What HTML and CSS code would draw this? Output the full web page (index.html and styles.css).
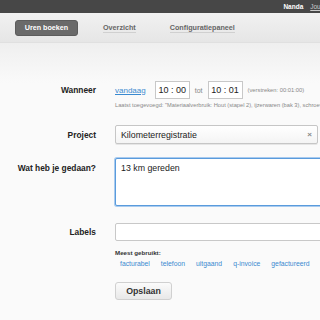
FILE: index.html
```html
<!DOCTYPE html>
<html>
  <head>
    <title>Uren boeken</title>
    <meta charset="utf-8" />
    <link rel="stylesheet" href="styles.css">
  </head>
  <body>
    <div class="topbar">
      <span class="user">Nanda</span>
      <a class="account" href="#">Jouw account</a>
    </div>
    <div class="nav">
      <a class="tab active" href="#">Uren boeken</a>
      <a class="tab" href="#">Overzicht</a>
      <a class="tab" href="#">Configuratiepaneel</a>
    </div>
    <div class="main">
      <form class="form">
        <div class="row row-when">
          <label class="lbl">Wanneer</label>
          <div class="field when">
            <a class="today" href="#">vandaag</a>
            <span class="time">10 : 00</span>
            <span class="tot">tot</span>
            <span class="time">10 : 01</span>
            <span class="elapsed">(verstreken: 00:01:00)</span>
          </div>
        </div>
        <p class="last">Laatst toegevoegd: "Materiaalverbruik: Hout (stapel 2), ijzerwaren (bak 3), schroeven</p>

        <div class="row row-project">
          <label class="lbl">Project</label>
          <div class="field">
            <div class="select">
              <span>Kilometerregistratie</span>
              <span class="clear">&times;</span>
            </div>
          </div>
        </div>

        <div class="row row-what">
          <label class="lbl lbl-top">Wat heb je gedaan?</label>
          <div class="field">
            <div class="textarea">13 km gereden</div>
          </div>
        </div>

        <div class="row row-labels">
          <label class="lbl">Labels</label>
          <div class="field">
            <div class="input"></div>
          </div>
        </div>

        <div class="row row-used">
          <span></span>
          <div class="field">
            <div class="used-title">Meest gebruikt:</div>
            <div class="tags">
              <a href="#">facturabel</a>
              <a href="#">telefoon</a>
              <a href="#">uitgaand</a>
              <a href="#">q-invoice</a>
              <a href="#">gefactureerd</a>
            </div>
          </div>
        </div>

        <div class="row row-submit">
          <span></span>
          <div class="field">
            <button class="save" type="button">Opslaan</button>
          </div>
        </div>
      </form>
    </div>
  </body>
</html>
```

FILE: styles.css
```css
*{
    margin:0;
    padding:0;
    box-sizing:border-box;
}
body{
    font-family:"Liberation Sans", Arial, sans-serif;
    background:#fafafa;
    color:#222;
    width:320px;
    height:320px;
    overflow:hidden;
}
a{
    text-decoration:none;
}

/* top bar */
.topbar{
    height:13px;
    background:#474747;
    display:flex;
    align-items:center;
    justify-content:flex-end;
    gap:7px;
    font-size:6.5px;
    white-space:nowrap;
    margin-right:-30px;
}
.user{
    color:#fff;
    font-weight:bold;
}
.account{
    color:#ccc;
    text-decoration:underline;
}

/* tabs */
.nav{
    height:30px;
    background:linear-gradient(#f1f1f1,#e6e6e6);
    border-bottom:1px solid #e0e0e0;
    display:flex;
    align-items:center;
    padding-left:15px;
}
.tab{
    font-size:7.2px;
    font-weight:bold;
    color:#666;
    margin-right:34px;
    border-bottom:1px solid #d0d0d0;
    line-height:9px;
}
.tab.active{
    background:#6a6a6a;
    color:#fff;
    border:1px solid #5c5c5c;
    border-radius:3px;
    width:63px;
    height:16px;
    line-height:14px;
    text-align:center;
    margin-right:25px;
}

/* form */
.main{
    background:linear-gradient(#efefef,#fafafa 40px);
    padding-top:38px;
    height:277px;
}
.row{
    display:grid;
    grid-template-columns:96px 240px;
    column-gap:19px;
    align-items:center;
}
.lbl{
    font-size:8.4px;
    font-weight:bold;
    text-align:right;
    color:#222;
}
.lbl-top{
    align-self:start;
    padding-top:5px;
}
.when{
    display:flex;
    align-items:center;
    white-space:nowrap;
}
.today{
    font-size:8px;
    color:#3a8ad0;
    text-decoration:underline;
    margin-right:9px;
}
.time{
    display:block;
    width:35px;
    height:18px;
    line-height:16px;
    text-align:center;
    background:#fff;
    border:1px solid #c8c8c8;
    font-size:9px;
    color:#222;
}
.tot{
    font-size:7px;
    color:#888;
    margin:0 5px;
}
.elapsed{
    font-size:5.8px;
    color:#888;
    margin-left:5px;
}
.last{
    font-size:5.7px;
    color:#888;
    margin:3px 0 0 115px;
    white-space:nowrap;
    height:7px;
}
.row-project{
    margin-top:16px;
}
.select{
    width:203px;
    height:19px;
    background:linear-gradient(#fff,#f4f4f4);
    border:1px solid #c6c6c6;
    border-radius:2px;
    display:flex;
    align-items:center;
    justify-content:space-between;
    padding:0 5px 0 5px;
    font-size:8.8px;
    color:#222;
    box-shadow:0 1px 0 #e6e6e6;
}
.clear{
    font-size:8px;
    color:#888;
    font-weight:bold;
}
.row-what{
    margin-top:14px;
}
.textarea{
    height:48px;
    background:#fff;
    border:1px solid #5a9bdc;
    box-shadow:0 0 0 1px #a9cbef;
    border-radius:2px;
    padding:4px 5px;
    font-size:8.8px;
    color:#222;
}
.row-labels{
    margin-top:17px;
}
.input{
    height:18px;
    background:#fff;
    border:1px solid #c8c8c8;
    border-radius:2px;
}
.row-used{
    margin-top:8px;
}
.used-title{
    font-size:6.2px;
    font-weight:bold;
    color:#333;
}
.tags{
    display:flex;
    gap:11px;
    padding-left:5px;
    margin-top:4px;
    white-space:nowrap;
}
.tags a{
    font-size:6.8px;
    color:#3a8ad0;
}
.row-submit{
    margin-top:13px;
}
.save{
    width:57px;
    height:18px;
    font-family:"Liberation Sans", Arial, sans-serif;
    font-size:8.8px;
    font-weight:bold;
    color:#333;
    background:linear-gradient(#fbfbfb,#e8e8e8);
    border:1px solid #d0d0d0;
    border-radius:3px;
}
```
